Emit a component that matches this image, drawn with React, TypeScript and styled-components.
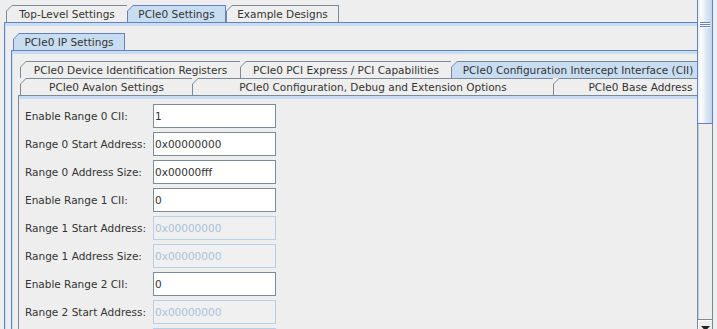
import styled, { createGlobalStyle } from "styled-components";

// Metal "Ocean" palette
const BLUE = "#6382bf";
const BAND = "#c8ddf2";
const GRAY = "#7a8a99";
const PALE = "#b8cfe5";
const BG = "#eeeeee";

interface TabDef {
  label: string;
  width: number;
  selected?: boolean;
  last?: boolean;
}

interface FieldDef {
  label: string;
  value: string;
  disabled?: boolean;
}

const topTabs: TabDef[] = [
  { label: "Top-Level Settings", width: 121 },
  { label: "PCIe0 Settings", width: 99, selected: true },
  { label: "Example Designs", width: 113, last: true },
];

const ipTabs: TabDef[] = [{ label: "PCIe0 IP Settings", width: 112, selected: true, last: true }];

const firstRun: TabDef[] = [
  { label: "PCIe0 Device Identification Registers", width: 220 },
  { label: "PCIe0 PCI Express / PCI Capabilities", width: 211 },
  { label: "PCIe0 Configuration Intercept Interface (CII)", width: 254, selected: true },
];

const secondRun: TabDef[] = [
  { label: "PCIe0 Avalon Settings", width: 172 },
  { label: "PCIe0 Configuration, Debug and Extension Options", width: 361 },
  { label: "PCIe0 Base Address", width: 174 },
];

const fields: FieldDef[] = [
  { label: "Enable Range 0 CII:", value: "1" },
  { label: "Range 0 Start Address:", value: "0x00000000" },
  { label: "Range 0 Address Size:", value: "0x00000fff" },
  { label: "Enable Range 1 CII:", value: "0" },
  { label: "Range 1 Start Address:", value: "0x00000000", disabled: true },
  { label: "Range 1 Address Size:", value: "0x00000000", disabled: true },
  { label: "Enable Range 2 CII:", value: "0" },
  { label: "Range 2 Start Address:", value: "0x00000000", disabled: true },
  { label: "Range 2 Address Size:", value: "0x00000000", disabled: true },
];

function TabRow({ tabs, edge, left, top = 0 }: { tabs: TabDef[]; edge: string; left: number; top?: number }) {
  return (
    <TabBar $left={left} $top={top}>
      {tabs.map((t) => (
        <TabShell key={t.label} $w={t.width} $edge={t.selected ? edge : GRAY} $closed={!!(t.selected || t.last)}>
          <TabFace $sel={t.selected}>{t.label}</TabFace>
        </TabShell>
      ))}
    </TabBar>
  );
}

export default function App() {
  return (
    <Window>
      <GlobalStyle />
      <Viewport>
        <TabRow tabs={topTabs} edge={BLUE} left={6} top={5} />
        <OuterPanel $edge={BLUE} $band="inset 1px 3px 0 0 #c8ddf2" $padTop={10} $padLeft={6}>
          <TabRow tabs={ipTabs} edge={BLUE} left={2} />
          <TabPanel $edge={BLUE} $band="inset 1px 3px 0 0 #c8ddf2" $padTop={10} $padLeft={6}>
            <TabRow tabs={firstRun} edge={GRAY} left={2} />
            <TabRow tabs={secondRun} edge={GRAY} left={2} />
            <TabPanel $edge={GRAY} $band="inset 0 3px 0 0 #c8ddf2" $padTop={8} $padLeft={6}>
              <Form>
                {fields.map((f) => (
                  <FormRow key={f.label}>
                    <Label>{f.label}</Label>
                    <Field $disabled={f.disabled}>{f.value}</Field>
                  </FormRow>
                ))}
              </Form>
            </TabPanel>
          </TabPanel>
        </OuterPanel>
      </Viewport>
      <ScrollBar>
        <Thumb>
          <Grip />
        </Thumb>
        <Track />
        <ArrowButton>
          <svg width="9" height="5" viewBox="0 0 9 5">
            <polygon points="0,0 9,0 4.5,5" fill="#222" />
          </svg>
        </ArrowButton>
      </ScrollBar>
    </Window>
  );
}

const GlobalStyle = createGlobalStyle`
  html, body {
    margin: 0;
    padding: 0;
    background: ${BG};
  }
  body {
    font-family: "DejaVu Sans", "Liberation Sans", sans-serif;
    font-size: 10.5px;
    color: #333333;
  }
`;

const Window = styled.div`
  width: 717px;
  height: 329px;
  display: flex;
  overflow: hidden;
  background: ${BG};
`;

const Viewport = styled.div`
  width: 697px;
  flex: none;
  display: flex;
  flex-direction: column;
  overflow: hidden;
`;

const TabBar = styled.div<{ $left: number; $top: number }>`
  display: flex;
  height: 17px;
  flex: none;
  padding: ${(p) => p.$top}px 0 0 ${(p) => p.$left}px;
`;

const TabShell = styled.div<{ $w: number; $edge: string; $closed: boolean }>`
  flex: none;
  width: ${(p) => p.$w}px;
  height: 17px;
  box-sizing: border-box;
  padding: 1px ${(p) => (p.$closed ? 1 : 0)}px 0 1px;
  background: ${(p) => p.$edge};
  clip-path: polygon(0 6px, 6px 0, 100% 0, 100% 100%, 0 100%);
`;

const TabFace = styled.div<{ $sel?: boolean }>`
  height: 100%;
  display: flex;
  align-items: center;
  justify-content: center;
  white-space: nowrap;
  background: ${(p) => (p.$sel ? BAND : BG)};
  clip-path: polygon(0 5px, 5px 0, 100% 0, 100% 100%, 0 100%);
`;

const TabPanel = styled.div<{ $edge: string; $band: string; $padTop: number; $padLeft: number }>`
  flex: 1;
  display: flex;
  flex-direction: column;
  border-top: 1px solid ${(p) => p.$edge};
  border-left: 1px solid ${(p) => p.$edge};
  box-shadow: ${(p) => p.$band};
  padding: ${(p) => p.$padTop}px 0 0 ${(p) => p.$padLeft}px;
`;

const OuterPanel = styled(TabPanel)`
  margin-left: 4px;
`;

const Form = styled.div`
  display: flex;
  flex-direction: column;
  gap: 4px;
`;

const FormRow = styled.div`
  display: grid;
  grid-template-columns: 128px 123px;
  align-items: center;
  height: 24px;
`;

const Label = styled.span`
  white-space: nowrap;
  color: #333333;
`;

const Field = styled.div<{ $disabled?: boolean }>`
  height: 24px;
  box-sizing: border-box;
  display: flex;
  align-items: center;
  padding-left: 1px;
  border: 1px solid ${(p) => (p.$disabled ? PALE : GRAY)};
  background: ${(p) => (p.$disabled ? "#f0f0f0" : "#ffffff")};
  color: ${(p) => (p.$disabled ? "#a9c1dc" : "#333333")};
`;

const ScrollBar = styled.div`
  width: 16px;
  height: 336px;
  flex: none;
  display: flex;
  flex-direction: column;
`;

const Thumb = styled.div`
  height: 124px;
  box-sizing: border-box;
  border: 1px solid ${BLUE};
  border-top: none;
  background: linear-gradient(90deg, #e4edf7 0%, #ffffff 22%, #dfe9f5 55%, #c3d6eb 100%);
  display: flex;
  justify-content: center;
`;

const Grip = styled.div`
  width: 10px;
  height: 6px;
  margin-top: 22px;
  background: repeating-linear-gradient(to bottom, ${BLUE} 0 1px, #ffffff 1px 2px);
`;

const Track = styled.div`
  flex: 1;
  border-left: 1px solid ${GRAY};
  border-right: 1px solid ${GRAY};
  box-shadow: inset 1px 0 0 0 ${PALE};
  background: ${BG};
`;

const ArrowButton = styled.div`
  height: 17px;
  flex: none;
  box-sizing: border-box;
  border: 1px solid ${GRAY};
  box-shadow: inset 1px 1px 0 0 #ffffff;
  background: ${BG};
  display: flex;
  justify-content: center;
  padding-top: 6px;
  svg {
    display: block;
  }
`;
